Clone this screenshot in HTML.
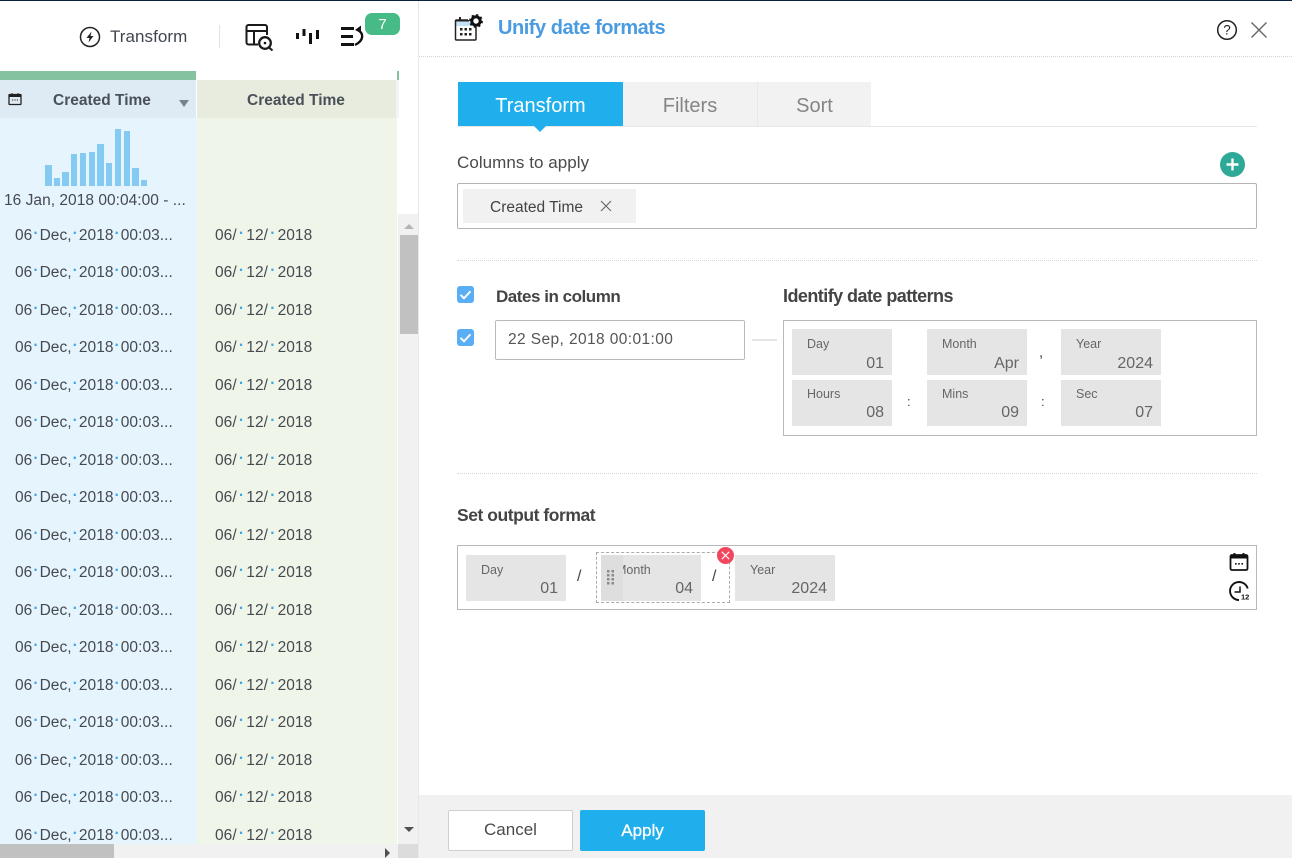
<!DOCTYPE html>
<html><head><meta charset="utf-8"><title>Unify date formats</title>
<style>
html,body{margin:0;padding:0;background:#fff}
body{width:1292px;height:858px;position:relative;overflow:hidden;font-family:"Liberation Sans",sans-serif;color:#444}
.a{position:absolute}
.t{position:absolute;white-space:nowrap;line-height:20px}
.row{position:absolute;left:0;width:397px;height:20px}
.row span{position:absolute;white-space:nowrap;font-size:15.5px;line-height:20px;color:#454a50;top:2px;letter-spacing:.05px}
.row i{font-style:normal;font-weight:700;color:#3ea6e8;margin:0 1px;position:relative;top:-2px}
.row span+span i{margin:0 2.2px}
.chip{position:absolute;background:#e5e5e5;width:100px;height:46px;color:#555}
.chip b{position:absolute;left:15px;top:7px;font-weight:400;font-size:12.5px;line-height:16px;color:#666}
.chip u{position:absolute;right:8px;top:25px;text-decoration:none;font-size:16px;line-height:18px;color:#666}
.bar{position:absolute;background:#85caf2;bottom:672px;width:7px}
</style></head><body>

<div class="a" style="left:0;top:0;width:1292px;height:1px;background:#0b2340"></div>

<!-- toolbar -->
<svg class="a" style="left:79px;top:26px" width="22" height="22" viewBox="0 0 22 22"><circle cx="11" cy="11" r="9.5" fill="none" stroke="#222" stroke-width="1.5"/><path d="M12.5 5.5 7.5 12h3l-1 4.5 5-6.5h-3z" fill="#222"/></svg>
<div class="t" style="left:110px;top:27px;font-size:17px;color:#3f4650;letter-spacing:.05px">Transform</div>
<div class="a" style="left:219px;top:25px;width:1px;height:23px;background:#e2e2e2"></div>
<svg class="a" style="left:245px;top:24px" width="30" height="28" viewBox="0 0 30 28" fill="none" stroke="#1a1a1a" stroke-width="2"><path d="M13 20.500H3.500a2 2 0 0 1-2-2V3a2 2 0 0 1 2-2h16.500a2 2 0 0 1 2 2v8M1.500 7h20.500M9 7v13.500"/><circle cx="20" cy="19" r="5.800" stroke-width="2.300"/><circle cx="20" cy="19" r="1.300" fill="#111" stroke="none"/><path d="M24 23.500l3.500 3"/></svg>
<svg class="a" style="left:295px;top:28px" width="26" height="18" viewBox="0 0 26 18" fill="#111"><rect x="1" y="5" width="3" height="6"/><rect x="7.500" y="1" width="3" height="7"/><rect x="14" y="5" width="3" height="11"/><rect x="21" y="2" width="3" height="9"/></svg>
<svg class="a" style="left:340px;top:25px" width="26" height="23" viewBox="0 0 26 23"><path d="M1 3.500h13M1 11.500h12M1 19.500h13" stroke="#111" stroke-width="3" fill="none"/><path d="M17 4.500C24 8 24.500 15 15 20" stroke="#111" stroke-width="2.400" fill="none"/><path d="M15 5 21 .5V8z" fill="#111"/></svg>
<div class="a" style="left:365px;top:13px;width:35px;height:22px;background:#47bb87;border-radius:7px;color:#fff;font-size:15px;line-height:24px;text-align:center">7</div>

<!-- table -->
<div class="a" style="left:0;top:71px;width:196px;height:9px;background:#85c3a0"></div>
<div class="a" style="left:397px;top:71px;width:2px;height:9px;background:#85c3a0"></div>
<div class="a" style="left:0;top:80px;width:196px;height:38px;background:#deebf4"></div>
<div class="a" style="left:197px;top:80px;width:199px;height:38px;background:#e7ecdf"></div>
<div class="a" style="left:396px;top:80px;width:3px;height:38px;background:#f4f4f4"></div>
<div class="a" style="left:0;top:118px;width:197px;height:740px;background:#e6f4fd"></div>
<div class="a" style="left:197px;top:118px;width:200px;height:740px;background:#f0f5e9"></div>
<svg class="a" style="left:8px;top:92px" width="14" height="14" viewBox="0 0 14 14"><path d="M1.500 2.500h11a.5.5 0 0 1 .5.5v9a.5.5 0 0 1-.5.5h-11A.5.5 0 0 1 1 12V3a.5.5 0 0 1 .5-.5z" fill="none" stroke="#222" stroke-width="1.300"/><path d="M1 2h12v3H1zM3.500 1h1v2h-1zM9.500 1h1v2h-1zM4 7.500h1.200v1H4zM6.400 7.500h1.200v1H6.400zM8.800 7.500H10v1H8.800z" fill="#222"/></svg>
<div class="t" style="left:53px;top:91px;font-size:15.500px;font-weight:700;color:#4a5058">Created Time</div>
<div class="t" style="left:247px;top:91px;font-size:15.500px;font-weight:700;color:#4a5058">Created Time</div>
<div class="a" style="left:179px;top:100px;width:0;height:0;border-left:5.500px solid transparent;border-right:5.500px solid transparent;border-top:7px solid #7b8288"></div>

<div class="bar" style="left:45px;height:21px"></div>
<div class="bar" style="left:54px;height:8px;width:6px"></div>
<div class="bar" style="left:62px;height:14px"></div>
<div class="bar" style="left:71px;height:32px;width:6px"></div>
<div class="bar" style="left:80px;height:33px;width:6px"></div>
<div class="bar" style="left:89px;height:34px;width:6px"></div>
<div class="bar" style="left:97px;height:42px"></div>
<div class="bar" style="left:106px;height:23px;width:6px"></div>
<div class="bar" style="left:115px;height:57px;width:6px"></div>
<div class="bar" style="left:124px;height:55px;width:6px"></div>
<div class="bar" style="left:132px;height:18px"></div>
<div class="bar" style="left:141px;height:6px;width:6px"></div>
<div class="t" style="left:4px;top:191px;font-size:15.500px;color:#454a50;letter-spacing:.03px">16 Jan, 2018 00:04:00 - ...</div>

<div class="row" style="top:224px"><span style="left:15px">06<i>·</i>Dec,<i>·</i>2018<i>·</i>00:03...</span><span style="left:215px">06/<i>·</i>12/<i>·</i>2018</span></div>
<div class="row" style="top:261px"><span style="left:15px">06<i>·</i>Dec,<i>·</i>2018<i>·</i>00:03...</span><span style="left:215px">06/<i>·</i>12/<i>·</i>2018</span></div>
<div class="row" style="top:299px"><span style="left:15px">06<i>·</i>Dec,<i>·</i>2018<i>·</i>00:03...</span><span style="left:215px">06/<i>·</i>12/<i>·</i>2018</span></div>
<div class="row" style="top:336px"><span style="left:15px">06<i>·</i>Dec,<i>·</i>2018<i>·</i>00:03...</span><span style="left:215px">06/<i>·</i>12/<i>·</i>2018</span></div>
<div class="row" style="top:374px"><span style="left:15px">06<i>·</i>Dec,<i>·</i>2018<i>·</i>00:03...</span><span style="left:215px">06/<i>·</i>12/<i>·</i>2018</span></div>
<div class="row" style="top:411px"><span style="left:15px">06<i>·</i>Dec,<i>·</i>2018<i>·</i>00:03...</span><span style="left:215px">06/<i>·</i>12/<i>·</i>2018</span></div>
<div class="row" style="top:449px"><span style="left:15px">06<i>·</i>Dec,<i>·</i>2018<i>·</i>00:03...</span><span style="left:215px">06/<i>·</i>12/<i>·</i>2018</span></div>
<div class="row" style="top:486px"><span style="left:15px">06<i>·</i>Dec,<i>·</i>2018<i>·</i>00:03...</span><span style="left:215px">06/<i>·</i>12/<i>·</i>2018</span></div>
<div class="row" style="top:524px"><span style="left:15px">06<i>·</i>Dec,<i>·</i>2018<i>·</i>00:03...</span><span style="left:215px">06/<i>·</i>12/<i>·</i>2018</span></div>
<div class="row" style="top:561px"><span style="left:15px">06<i>·</i>Dec,<i>·</i>2018<i>·</i>00:03...</span><span style="left:215px">06/<i>·</i>12/<i>·</i>2018</span></div>
<div class="row" style="top:599px"><span style="left:15px">06<i>·</i>Dec,<i>·</i>2018<i>·</i>00:03...</span><span style="left:215px">06/<i>·</i>12/<i>·</i>2018</span></div>
<div class="row" style="top:636px"><span style="left:15px">06<i>·</i>Dec,<i>·</i>2018<i>·</i>00:03...</span><span style="left:215px">06/<i>·</i>12/<i>·</i>2018</span></div>
<div class="row" style="top:674px"><span style="left:15px">06<i>·</i>Dec,<i>·</i>2018<i>·</i>00:03...</span><span style="left:215px">06/<i>·</i>12/<i>·</i>2018</span></div>
<div class="row" style="top:711px"><span style="left:15px">06<i>·</i>Dec,<i>·</i>2018<i>·</i>00:03...</span><span style="left:215px">06/<i>·</i>12/<i>·</i>2018</span></div>
<div class="row" style="top:749px"><span style="left:15px">06<i>·</i>Dec,<i>·</i>2018<i>·</i>00:03...</span><span style="left:215px">06/<i>·</i>12/<i>·</i>2018</span></div>
<div class="row" style="top:786px"><span style="left:15px">06<i>·</i>Dec,<i>·</i>2018<i>·</i>00:03...</span><span style="left:215px">06/<i>·</i>12/<i>·</i>2018</span></div>
<div class="row" style="top:824px"><span style="left:15px">06<i>·</i>Dec,<i>·</i>2018<i>·</i>00:03...</span><span style="left:215px">06/<i>·</i>12/<i>·</i>2018</span></div>

<!-- scrollbars -->
<div class="a" style="left:398px;top:214px;width:20px;height:630px;background:#f1f1f1"></div>
<div class="a" style="left:400px;top:235px;width:18px;height:99px;background:#c1c1c1"></div>
<div class="a" style="left:404px;top:224px;width:0;height:0;border-left:5px solid transparent;border-right:5px solid transparent;border-bottom:5px solid #b5b5b5"></div>
<div class="a" style="left:404px;top:827px;width:0;height:0;border-left:5px solid transparent;border-right:5px solid transparent;border-top:5px solid #505050"></div>
<div class="a" style="left:0;top:844px;width:398px;height:14px;background:#f1f1f1"></div>
<div class="a" style="left:0;top:844px;width:114px;height:14px;background:#c1c1c1"></div>
<div class="a" style="left:385px;top:848px;width:0;height:0;border-top:5px solid transparent;border-bottom:5px solid transparent;border-left:5px solid #505050"></div>
<div class="a" style="left:398px;top:844px;width:20px;height:14px;background:#dcdcdc"></div>

<!-- panel -->
<div class="a" style="left:418px;top:1px;width:1px;height:857px;background:#e8e8e8"></div>
<svg class="a" style="left:454px;top:13px" width="30" height="29" viewBox="0 0 30 29"><path d="M2 7h19v6H2z" fill="#c5e2f7"/><path d="M14 7H2.500a1 1 0 0 0-1 1v18a1 1 0 0 0 1 1H21a1 1 0 0 0 1-1V14" fill="none" stroke="#222" stroke-width="1.500"/><path d="M5 4h2v4H5zM2 7h13v1.500H2zM6 15h2.500v2.500H6zM10.500 15H13v2.500h-2.500zM15 15h2.500v2.500H15zM6 20h2.500v2.500H6zM10.500 20H13v2.500h-2.500zM15 20h2.500v2.500H15z" fill="#222"/><circle cx="22" cy="8" r="4.200" fill="#fff" stroke="#111" stroke-width="3"/><circle cx="22" cy="8" r="6" fill="none" stroke="#111" stroke-width="1.800" stroke-dasharray="2.200 2.500"/></svg>
<div class="t" style="left:498px;top:18px;font-size:20px;font-weight:700;color:#4a9be0;letter-spacing:-.47px">Unify date formats</div>
<svg class="a" style="left:1216px;top:19px" width="22" height="22" viewBox="0 0 22 22"><circle cx="11" cy="11" r="9.300" fill="none" stroke="#222" stroke-width="1.500"/><text x="11" y="15.500" text-anchor="middle" font-family="Liberation Sans" font-size="13.500" fill="#222">?</text></svg>
<svg class="a" style="left:1250px;top:21px" width="18" height="18" viewBox="0 0 18 18"><path d="M1.500 1.500l15 15M16.500 1.500l-15 15" stroke="#666" stroke-width="1.400" fill="none"/></svg>
<div class="a" style="left:419px;top:56px;width:873px;height:0;border-top:1px dotted #d5d5d5"></div>

<!-- tabs -->
<div class="a" style="left:458px;top:82px;width:165px;height:44px;background:#1fafec;color:#fff;font-size:20px;line-height:48px;text-align:center">Transform</div>
<div class="a" style="left:623px;top:82px;width:134px;height:44px;background:#f2f2f2;color:#858585;font-size:20px;line-height:48px;text-align:center">Filters</div>
<div class="a" style="left:757px;top:82px;width:1px;height:44px;background:#e8e8e8"></div>
<div class="a" style="left:758px;top:82px;width:113px;height:44px;background:#f2f2f2;color:#858585;font-size:20px;line-height:48px;text-align:center">Sort</div>
<div class="a" style="left:457px;top:126px;width:800px;height:1px;background:#e8e8e8"></div>
<div class="a" style="left:534px;top:126px;width:0;height:0;border-left:6px solid transparent;border-right:6px solid transparent;border-top:6px solid #1fafec"></div>

<div class="t" style="left:457px;top:153px;font-size:17px;color:#4a4a4a;letter-spacing:.05px">Columns to apply</div>
<svg class="a" style="left:1220px;top:152px" width="25" height="25" viewBox="0 0 25 25"><circle cx="12.500" cy="12.500" r="12.500" fill="#2ea897"/><path d="M12.500 6.500v12M6.500 12.500h12" stroke="#fff" stroke-width="2.400"/></svg>
<div class="a" style="left:457px;top:183px;width:798px;height:44px;border:1px solid #b4b4b4;border-radius:2px"></div>
<div class="a" style="left:463px;top:189px;width:173px;height:34px;background:#f1f1f1"></div>
<div class="t" style="left:490px;top:197px;font-size:15.500px;color:#444;line-height:21px">Created Time</div>
<svg class="a" style="left:600px;top:200px" width="12" height="12" viewBox="0 0 12 12"><path d="M1 1l10 10M11 1L1 11" stroke="#666" stroke-width="1.100"/></svg>

<div class="a" style="left:457px;top:260px;width:800px;height:0;border-top:1px dotted #d5d5d5"></div>

<svg class="a" style="left:457px;top:286px" width="17" height="17" viewBox="0 0 17 17"><rect width="17" height="17" rx="3" fill="#5aaef5"/><path d="M3.500 8.800l3.500 3.500 6.500-7" fill="none" stroke="#fff" stroke-width="1.900"/></svg>
<div class="t" style="left:496px;top:287px;font-size:17px;font-weight:700;color:#444;letter-spacing:-.47px">Dates in column</div>
<div class="t" style="left:783px;top:286px;font-size:18px;font-weight:700;color:#444;letter-spacing:-.55px">Identify date patterns</div>
<svg class="a" style="left:457px;top:329px" width="17" height="17" viewBox="0 0 17 17"><rect width="17" height="17" rx="3" fill="#5aaef5"/><path d="M3.500 8.800l3.500 3.500 6.500-7" fill="none" stroke="#fff" stroke-width="1.900"/></svg>
<div class="a" style="left:495px;top:320px;width:248px;height:38px;border:1px solid #b9b9b9;border-radius:2px"></div>
<div class="t" style="left:508px;top:329px;font-size:15.500px;color:#555;letter-spacing:.4px;line-height:21px">22 Sep, 2018 00:01:00</div>
<div class="a" style="left:752px;top:339px;width:25px;height:2px;background:#e5e5e5"></div>

<div class="a" style="left:783px;top:320px;width:472px;height:114px;border:1px solid #b9b9b9"></div>
<div class="chip" style="left:792px;top:329px"><b>Day</b><u style="top:26px">01</u></div>
<div class="chip" style="left:927px;top:329px"><b>Month</b><u style="top:26px">Apr</u></div>
<div class="chip" style="left:1061px;top:329px"><b>Year</b><u style="top:26px">2024</u></div>
<div class="chip" style="left:792px;top:380px"><b style="top:6px">Hours</b><u style="top:24px">08</u></div>
<div class="chip" style="left:927px;top:380px"><b style="top:6px">Mins</b><u style="top:24px">09</u></div>
<div class="chip" style="left:1061px;top:380px"><b style="top:6px">Sec</b><u style="top:24px">07</u></div>
<div class="t" style="left:1039px;top:343px;font-size:15px;color:#444">,</div>
<div class="t" style="left:907px;top:392px;font-size:13px;color:#444">:</div>
<div class="t" style="left:1041px;top:392px;font-size:13px;color:#444">:</div>

<div class="a" style="left:457px;top:473px;width:800px;height:0;border-top:1px dotted #d5d5d5"></div>

<div class="t" style="left:457px;top:505px;font-size:17.500px;font-weight:700;color:#444;letter-spacing:-.45px">Set output format</div>
<div class="a" style="left:457px;top:545px;width:798px;height:63px;border:1px solid #b9b9b9"></div>
<div class="chip" style="left:466px;top:555px"><b>Day</b><u>01</u></div>
<div class="t" style="left:577px;top:567px;font-size:16px;color:#444">/</div>
<div class="a" style="left:596px;top:552px;width:132px;height:49px;border:1px dashed #aaa"></div>
<div class="chip" style="left:601px;top:555px;overflow:hidden"><b>Month</b><u>04</u><div class="a" style="left:0;top:0;width:22px;height:46px;background:#dedede"></div></div>
<svg class="a" style="left:607px;top:569px" width="9" height="18" viewBox="0 0 9 18" fill="#8a8a8a"><rect x="0" y="1" width="2.500" height="2.500"/><rect x="4.500" y="1" width="2.500" height="2.500"/><rect x="0" y="5" width="2.500" height="2.500"/><rect x="4.500" y="5" width="2.500" height="2.500"/><rect x="0" y="9" width="2.500" height="2.500"/><rect x="4.500" y="9" width="2.500" height="2.500"/><rect x="0" y="13" width="2.500" height="2.500"/><rect x="4.500" y="13" width="2.500" height="2.500"/></svg>
<div class="t" style="left:712px;top:567px;font-size:16px;color:#444">/</div>
<div class="chip" style="left:735px;top:555px"><b>Year</b><u>2024</u></div>
<svg class="a" style="left:717px;top:547px" width="17" height="17" viewBox="0 0 17 17"><circle cx="8.500" cy="8.500" r="8.500" fill="#f2465f"/><path d="M4.800 4.800l7.400 7.400M12.200 4.800l-7.400 7.400" stroke="#fff" stroke-width="1.100"/></svg>
<svg class="a" style="left:1229px;top:552px" width="21" height="20" viewBox="0 0 21 20"><rect x="1.500" y="3" width="17" height="15" rx="1.500" fill="none" stroke="#111" stroke-width="1.800"/><path d="M1.500 3h17v3.500h-17zM4.500 1h2v3h-2zM13.500 1h2v3h-2zM6 11h1.600v1.600H6zM9.200 11h1.600v1.600H9.200zM12.400 11H14v1.600h-1.600z" fill="#111"/></svg>
<svg class="a" style="left:1228px;top:580px" width="24" height="23" viewBox="0 0 24 23"><path d="M19.700 8.500A9 9 0 1 0 11 20" fill="none" stroke="#111" stroke-width="1.900"/><path d="M12 6.500v5.500H6.500" fill="none" stroke="#111" stroke-width="1.500"/><text x="13" y="19.500" font-family="Liberation Sans" font-size="7.500" font-weight="700" fill="#111">12</text></svg>

<!-- footer -->
<div class="a" style="left:419px;top:795px;width:873px;height:63px;background:#f1f1f1"></div>
<div class="a" style="left:448px;top:810px;width:123px;height:39px;background:#fff;border:1px solid #cfcfcf;border-radius:2px;color:#4a4a4a;font-size:17px;line-height:37px;text-align:center">Cancel</div>
<div class="a" style="left:580px;top:810px;width:125px;height:41px;background:#1fafec;border-radius:2px;color:#fff;font-size:17px;line-height:41px;text-align:center;-webkit-text-stroke:.3px #fff">Apply</div>

</body></html>
